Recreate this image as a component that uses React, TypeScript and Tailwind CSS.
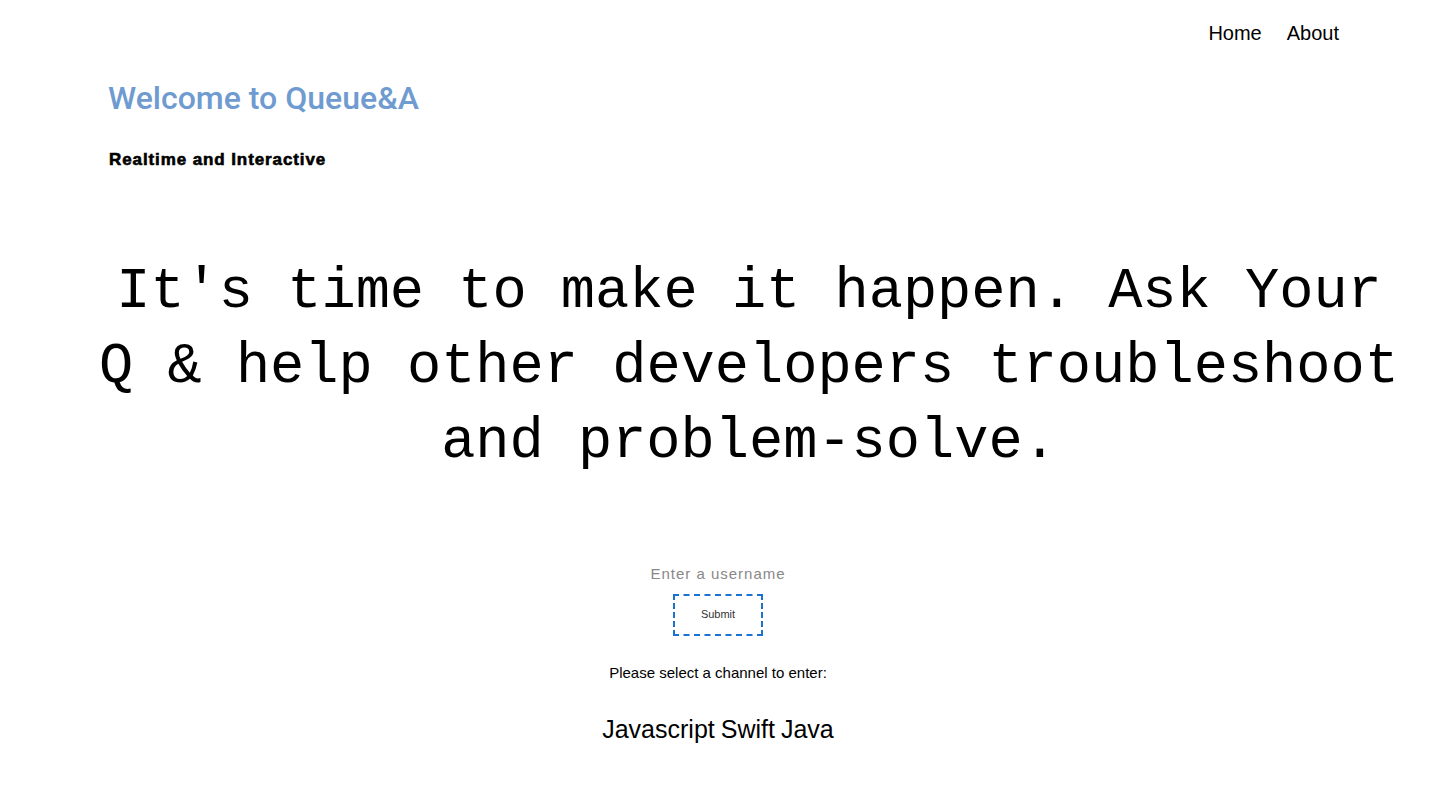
const App = () => {
  return (
    <div className="min-h-screen bg-white text-black" style={{ fontFamily: '"Liberation Sans", Arial, sans-serif' }}>
      <nav className="flex h-[66px] items-center justify-end gap-[25px] pr-[97px] text-[20px]">
        <a href="#" className="text-black">Home</a>
        <a href="#" className="text-black">About</a>
      </nav>

      <header className="pl-[108px] pt-[12px]">
        <h1 className="text-[32px] leading-[40px] font-medium text-[#6f9bd0] font-['Roboto',sans-serif]">Welcome to Queue&amp;A</h1>
        <h3 className="mt-[32px] pl-[1px] text-[17px] font-black tracking-[0.9px] leading-[20px] [-webkit-text-stroke:0.6px_black]">
          Realtime and Interactive
        </h3>
      </header>

      <section className="mt-[85px] ml-[84px] w-[1330px]">
        <h2 className="text-center text-[57px] leading-[75px] font-light font-['Liberation_Mono',monospace]">
          It's time to make it happen. Ask Your Q &amp; help other developers troubleshoot and problem-solve.
        </h2>
      </section>

      <section className="mt-[83px] flex flex-col items-center">
        <input
          type="text"
          placeholder="Enter a username"
          className="w-[200px] text-center text-[15px] tracking-[1px] placeholder:text-[#888] outline-none"
        />
        <button className="mt-[8px] h-[42px] w-[90px] border-2 border-dashed border-[#1a73d0] text-[11px] text-[#333]">
          Submit
        </button>
        <p className="mt-[26px] text-[15px]">Please select a channel to enter:</p>
        <div className="mt-[27px] flex gap-[6px] text-[25px]">
          <span>Javascript</span>
          <span>Swift</span>
          <span>Java</span>
        </div>
      </section>
    </div>
  )
}

export default App
